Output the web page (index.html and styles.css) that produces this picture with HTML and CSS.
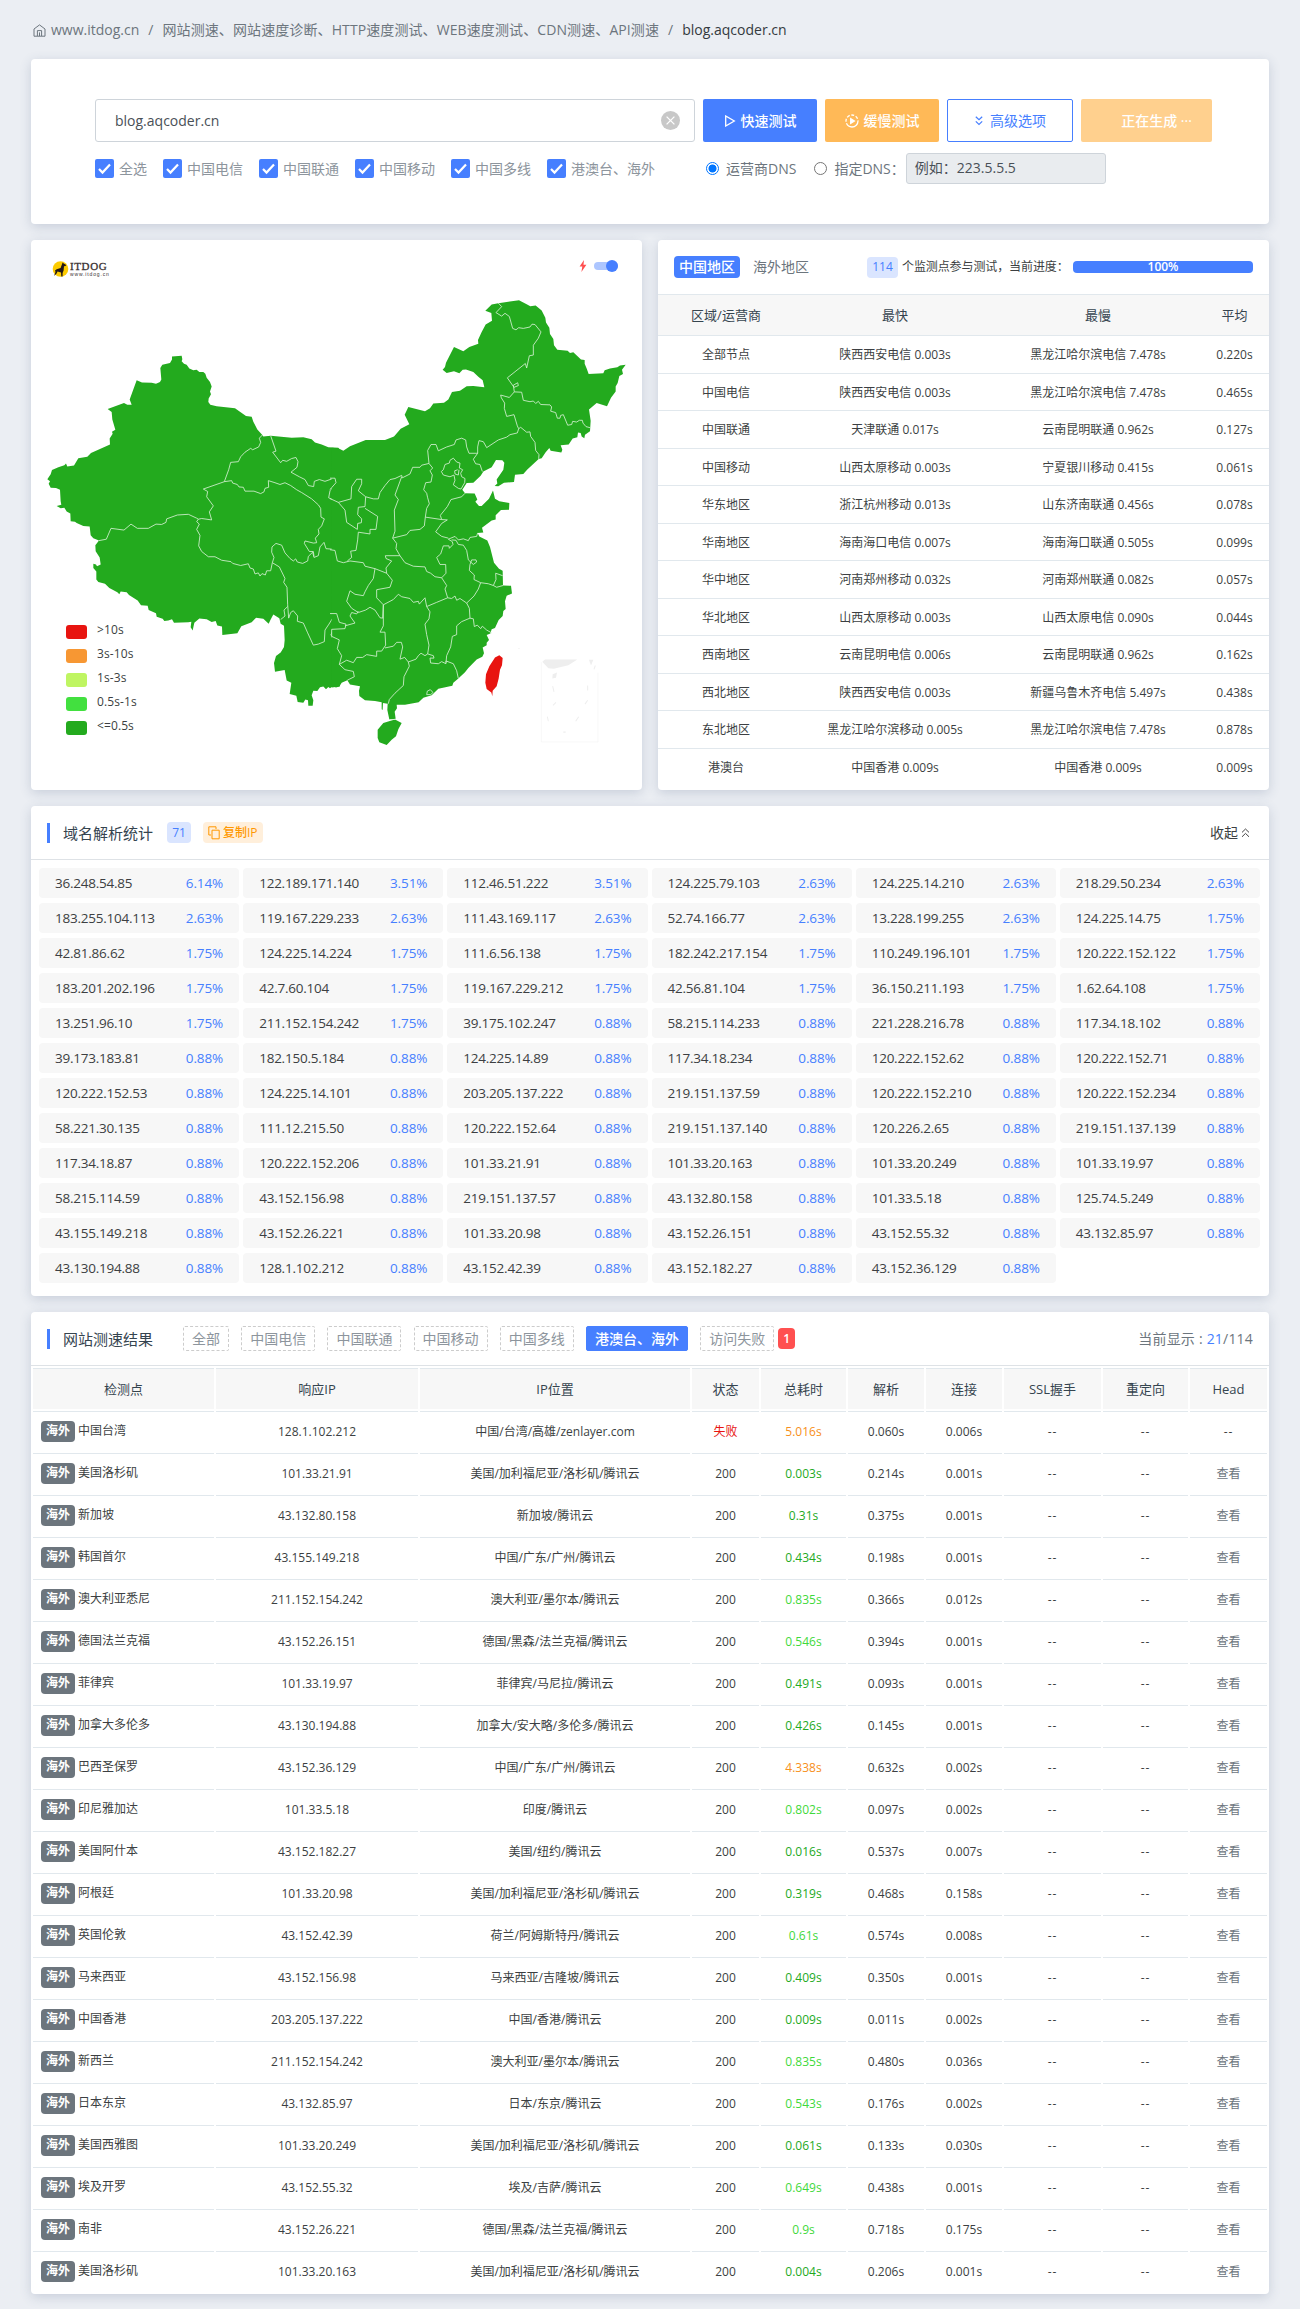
FILE: index.html
```html
<!DOCTYPE html>
<html lang="zh-CN">
<head>
<meta charset="utf-8">
<title>blog.aqcoder.cn - 网站测速</title>
<link rel="stylesheet" href="styles.css">
</head>
<body>
<nav class="breadcrumb">
  <svg class="home" width="13" height="13" viewBox="0 0 13 13"><path d="M1 5 6.5.9 12 5v7.2H1zM4.4 12V6.6h4.2V12M6.5 8.4V12"/></svg>
  <a>www.itdog.cn</a><i>/</i><a class="wide">网站测速、网站速度诊断、HTTP速度测试、WEB速度测试、CDN测速、API测速</a><i>/</i><b>blog.aqcoder.cn</b>
</nav>

<section class="card search">
  <div class="row">
    <div class="host"><span>blog.aqcoder.cn</span>
      <svg width="19" height="19" viewBox="0 0 19 19"><circle cx="9.5" cy="9.5" r="9.5" fill="#c8c8c8"/><path d="m5.6 5.6 7.8 7.8m0-7.8-7.8 7.8" stroke="#fff" stroke-width="1.3"/></svg>
    </div>
    <button class="btn fast"><svg width="12" height="12" viewBox="0 0 12 12"><path d="M1.7 1v10l8.6-5z"/></svg>快速测试</button>
    <button class="btn slow"><svg width="14" height="14" viewBox="0 0 14 14"><circle cx="7" cy="7" r="6" stroke-dasharray="16 1.6 3 1.6 3 1.6 3 1.6 3 1.6"/><path d="M5.7 4.6v4.8L9.4 7z" fill="#fff"/></svg>缓慢测试</button>
    <button class="btn more"><svg width="10" height="10" viewBox="0 0 10 10"><path d="m1.8.8 3.2 3 3.2-3M1.8 5.4l3.2 3 3.2-3"/></svg>高级选项</button>
    <button class="btn busy">正在生成 ···</button>
  </div>
  <div class="row options">
    <div class="checks" id="checks"></div>
    <div class="dns">
      <span class="radio on"></span><span>运营商DNS</span>
      <span class="radio second"></span><span>指定DNS：</span>
      <span class="dns-input">例如：223.5.5.5</span>
    </div>
  </div>
</section>

<div class="pair">
  <section class="card map">
    <svg class="china" width="611" height="550" viewBox="0 0 611 550">
      <g transform="translate(-1 0) scale(.33333 .35077)">
        <path class="land" d="M426 332 455 330 457 340 455 346 462 353 470 356 478 366 490 371 500 370 508 376 520 376 526 381 530 393 540 405 545 418 540 432 543 440 536 452 535 462 541 470 560 474 615 480 632 491 648 502 665 504 670 518 682 540 697 556 700 560 722 558 785 564 820 562 845 568 855 577 875 583 895 591 925 592 930 600V1272L918 1276 908 1272 900 1278 895 1274 888 1281 880 1273 870 1275 862 1286 850 1285 845 1298 850 1312 848 1328 835 1328 834 1312 826 1310 820 1319 803 1317 799 1299 779 1294 784 1262 770 1256 764 1226 735 1231 732 1206 738 1186 752 1176 762 1160 764 1140 762 1100 752 1094 748 1078 730 1068 722 1082 716 1094 700 1080 678 1077 665 1090 634 1101 622 1121 577 1126 576 1102 562 1099 557 1086 545 1089 530 1081 508 1079 493 1091 488 1113 482 1104 484 1088 475 1090 432 1091 426 1081 415 1085 403 1086 398 1080 380 1074 378 1064 356 1055 353 1043 333 1041 323 1028 297 1012 290 1004 272 1002 268 1010 262 1004 238 992 225 980 205 975 199 968 199 945 190 935 190 923 198 925 201 930 212 925 209 905 197 887 196 870 207 857 190 850 182 842 179 817 160 815 140 807 135 803 122 802 121 780 110 774 103 763 92 765 80 758 94 755 92 745 90 712 78 707 62 706 56 695 60 688 52 682 62 668 66 656 85 648 103 642 108 637 112 646 132 643 145 622 172 618 183 607 240 583 239 566 248 552 246 547 256 541 247 512 245 490 233 482 282 465 292 470 305 470 299 455 320 400 336 406 365 407 378 410 390 405 394 398 391 365 397 356 420 351 426 341z"/>
        <path class="edge" d="M697 556 688 565 692 577 686 590 668 598 662 594 645 605 632 618 625 632 602 634 596 655 583 689M722 558 738 602 728 605 752 635 758 628 770 631 785 623 798 620 804 632 801 648 783 662 808 675 825 683 835 700 851 703 853 688 868 683 885 688 915 678 919 692 900 715 896 735 925 748M583 689 605 686 608 693 622 697 627 704 640 705 645 716 672 716 692 723 702 718 705 708 716 705 715 686 735 692 750 697 765 692 782 700 800 712 815 720 845 738 865 755 872 765 873 790 883 795 875 815 865 825 867 838 856 850 860 863 850 864 825 858 823 865 838 888 850 888 852 902M583 689 520 710 533 717 530 732 550 758 538 775 545 798 515 794 505 796M207 857 229 853 243 822 282 827 303 810 322 822 355 822 378 810 395 811 408 805 410 795 442 784 475 782 500 793 505 796 500 803 508 810 500 825 510 842 506 872 515 888 535 903 555 903 575 913 603 917 608 922 632 928 655 923 660 935 670 938 675 952 685 949 690 958 696 951 706 955 710 943 722 943 727 920 732 905 725 890 726 875 738 865 755 870 765 892 780 908 790 915 797 909 802 918 818 922 833 915 835 902 848 890 852 905 865 900 870 875 882 862 888 880 915 882 925 915M727 920 748 932 765 965 761 976 771 990 773 1040 776 1078M773 1045 762 1055 765 1072 752 1082M776 1078 782 1062 790 1057 803 1072 802 1087 820 1092 833 1120 850 1155 865 1152 883 1145 885 1112 897 1095 908 1078 907 1063 922 1065M925 1108 910 1110 903 1125 908 1137 925 1140"/>
      </g>
      <g transform="translate(299 0) scale(.33333 .35077)">
        <path class="land" d="M5 592 25 594 40 601 60 588 107 570 165 570 192 560 212 538 238 525 224 498 235 476 285 488 300 480 310 466 342 464 355 455 366 433 390 430 410 417 430 416 463 420 458 400 445 390 430 376 408 369 398 370 388 380 372 374 350 379 338 370 345 362 348 350 372 305 400 317 418 305 445 296 444 285 455 262 467 241 486 230 484 208 466 202 485 184 505 180 567 172 590 183 601 189 617 187 635 201 646 222 648 235 658 250 660 268 670 282 672 300 682 313 713 316 720 322 730 320 753 341 764 342 764 353 770 366 776 382 820 380 824 371 840 366 862 363 870 358 887 356 876 370 879 382 868 388 863 408 857 418 857 432 843 450 831 474 800 465 777 483 782 515 780 545 765 555 763 565 755 560 752 550 744 549 742 562 728 566 716 583 692 585 697 598 694 606 662 601 658 593 647 605 635 622 626 624 592 654 580 667 555 669 552 690 522 692 505 702 494 701 502 694 500 683 520 655 523 635 517 628 498 627 485 648 460 660 452 672 430 692 410 693 397 712 405 722 434 723 442 740 436 746 447 758 455 758 477 738 489 714 495 738 508 745 538 750 537 769 513 770 497 785 497 797 485 800 456 820 460 834 443 835 448 845 472 857 480 875 492 920 507 937 518 943 519 985 543 986 546 1008 530 1014 525 1030 527 1052 520 1058 518 1072 506 1083 495 1106 485 1110 481 1122 470 1126 477 1140 470 1148 470 1155 458 1162 462 1178 457 1188 440 1196 415 1220 405 1232 385 1250 370 1262 367 1271 325 1279 305 1298 280 1305 266 1318 225 1325 200 1325 201 1335 194 1345 197 1365 178 1367 172 1340 173 1322 159 1320 158 1340 155 1338 155 1318 135 1314 105 1312 88 1300 87 1285 90 1272 60 1267 52 1255 35 1262 28 1273 5 1276zM160 1377 177 1372 195 1367 215 1377 205 1395 198 1415 185 1425 170 1440 148 1432 143 1420 143 1396z"/>
        <path class="edge" d="M505 180 515 190 498 207 515 217 525 209 538 218 548 252 558 256 566 250 580 252 600 248 606 240 615 241 633 262 625 280 610 300 610 328 598 330 590 365 586 352 532 393 552 420 565 415 563 407 550 414 553 433 575 434 580 457 600 461 610 459 617 466 625 460 632 469 660 470 665 476 662 488 677 492 682 508 690 508 692 500 700 498 713 528 725 526 728 517 740 519 748 514 757 514 759 522 768 532 780 535M553 433 538 449 512 442 514 450 524 465 523 480 530 503 552 498 562 530 566 538 572 534 590 548 600 547 602 560 615 577 617 600 627 612 626 624M566 538 562 550 540 555 530 562 505 570 470 592 460 575 447 572 443 590 443 608 430 625 437 638 450 640 457 660M443 608 417 608 410 590 407 570 395 565 378 570 373 583 350 590 325 601 318 583 303 583 293 600 297 637 308 650 300 658 307 670 303 690 287 692 281 712 290 722 293 735 298 752 290 765 286 790M340 655 345 640 358 636 360 628 370 622 380 633 390 636 388 650 398 655 392 665 395 675 405 680 404 692 393 710 385 708 370 698 375 685 372 670 360 675 340 670 334 660zM383 655 374 658 375 667 385 670 387 655M297 637 275 642 270 648 248 648 240 667 217 678 215 671 195 680 180 683 165 700 150 720 145 738 130 738 107 732M215 675 195 727 205 740 193 770 195 830 188 850 230 840 240 828 270 825 283 815 286 790 335 797 331 785 352 760 363 740 395 732 405 722M335 797 352 798 335 808 317 832 335 845 355 850M0 737 25 748 63 738 65 703 80 682 95 682 95 695 85 715 107 732 105 760 85 762 83 783 95 795 94 806 83 808 82 825 50 805 45 770 25 748M0 679 15 679 18 692 5 706 0 711M105 765 143 788 138 825 120 825 120 838 85 833 83 855 78 885 62 887 65 905 52 915M0 883 15 885 22 915 40 920 60 915 100 920 105 930 135 937 170 950 187 970 180 990 140 997 140 1020 160 1040 158 1078 150 1077 135 1055 120 1047 107 1055 85 1062 65 1050 50 1030 60 1000 75 1010 100 1014 105 1003 115 985 130 965 135 937M170 950 168 935 185 915 168 908 166 900 210 900M188 850 200 865 198 880 210 900 225 920 250 930 285 932 290 945 302 950 315 960 335 963 348 950 347 925 330 925 320 905 332 895 340 872 357 872 358 879 369 868 367 860 355 853 375 845 385 855 400 852 415 857 420 848 440 845 443 835M365 855 378 856 385 868 400 870 410 885 415 912 430 925 440 918 438 912 425 912 420 925 418 942 433 955 432 968 452 977 475 980 490 985 500 990 519 985M490 985 498 968 497 950 518 957M335 963 350 985 345 995 353 1020 365 1022 375 1015 380 1027 390 1022 410 1035M452 977 445 995 432 1015 410 1035 418 1050 420 1078 430 1080 433 1102 442 1098 452 1108 457 1101 470 1112 485 1120M420 1078 395 1088 380 1100 380 1125 367 1130 362 1160 350 1185 348 1205M160 1040 190 1025 205 1010 215 1017 240 1022 250 1033 265 1030 268 1038 285 1020 290 1045 320 1033 353 1020M290 1045 300 1060 297 1080 285 1095 290 1125 297 1155 293 1180 285 1185 273 1178 265 1185 258 1195 235 1203 224 1190 210 1195 218 1160 214 1147 200 1147 190 1158 165 1163M160 1040 160 1100 150 1118 165 1118 167 1155 155 1172 140 1172 140 1187 110 1182 98 1190 80 1190 70 1205 50 1198 28 1210 35 1185 22 1165 28 1140 5 1130 5 1110 45 1108 48 1095 28 1090 20 1065 0 1065M45 1100 75 1092 60 1072 65 1062 80 1066 85 1058M28 1210 45 1225 70 1230 73 1245 52 1255M235 1203 238 1215 222 1245 220 1270 195 1292 178 1310 175 1322M293 1180 310 1185 312 1192 300 1192 302 1206 325 1208 335 1202 348 1208 348 1200 370 1208 380 1228 385 1250M178 1367 196 1367M290 1296 292 1286 301 1282 309 1290 302 1296z"/>
        <path fill="#e81410" d="M495 1190 508 1184 518 1192 516 1212 510 1225 506 1250 500 1272 488 1285 487 1301 484 1290 470 1280 466 1262 468 1238 478 1215z"/>
        <path fill="none" stroke="#f4f4f4" stroke-width="2" d="M634 1204V1431H804V1234"/>
        <path fill="#eee" d="M637 1202 645 1196 742 1196 715 1212 690 1218 672 1222 655 1221zM777 1197H790L783 1213zM668 1238 681 1233 678 1248 667 1250z"/>
        <path fill="none" stroke="#eee" stroke-width="3" d="M668 1272 672 1288M678 1318 669 1327M652 1359 655 1372M700 1403H707M737 1372 746 1359M765 1323 773 1312M773 1270V1284M792 1224 796 1213M567 1163V1166"/>
      </g>
    </svg>
    <div class="map-head">
      <div class="logo">
        <svg width="17" height="16" viewBox="0 0 17 16"><circle cx="8.5" cy="8" r="7.8" fill="#fccb00"/><path d="M2 15 3.5 11 3 9.6 4.7 8.3 8.6 7 10.6 1.4 11.7 2.6 14.2 4 13.6 5 12 5.3 11.6 9.6 10.6 12V15.5H9.3L9 11.5 5.5 10.6 4.6 12.6z" fill="#231815"/></svg>
        <div><b>ITDOG</b><small>www.itdog.cn</small></div>
      </div>
      <div class="switch">
        <svg width="8" height="12" viewBox="0 0 8 12"><path d="M5 0 .6 6.4H3.3L2.4 12 7.4 4.8H4.5z" fill="#ff5050"/></svg>
        <span class="track"></span>
      </div>
    </div>
    <ul class="legend">
      <li><i class="l1"></i>&gt;10s</li><li><i class="l2"></i>3s-10s</li><li><i class="l3"></i>1s-3s</li><li><i class="l4"></i>0.5s-1s</li><li><i class="l5"></i>&lt;=0.5s</li>
    </ul>
  </section>

  <section class="card region">
    <div class="region-head">
      <span class="area on">中国地区</span><span class="area">海外地区</span>
      <span class="badge blue push">114</span><span class="note">个监测点参与测试，当前进度：</span><span class="bar">100%</span>
    </div>
    <table class="stats">
      <colgroup><col class="s1"><col class="s2"><col class="s3"><col class="s4"></colgroup>
      <thead><tr><th>区域/运营商</th><th>最快</th><th>最慢</th><th>平均</th></tr></thead>
      <tbody id="stats"></tbody>
    </table>
  </section>
</div>

<section class="card resolve">
  <header class="title">
    <h2>域名解析统计</h2><span class="badge blue count">71</span>
    <span class="badge copy"><svg width="12" height="14" viewBox="0 0 12 14"><path d="M3 9H.8V.8H8V3M4 4.2h7.2v8.6H4z"/></svg>复制IP</span>
    <span class="fold">收起<svg width="9" height="10" viewBox="0 0 9 10"><path d="M1 4.4 4.5 1 8 4.4M1 8.8l3.5-3.4L8 8.8"/></svg></span>
  </header>
  <div class="ips" id="ips"></div>
</section>

<section class="card result">
  <header class="title">
    <h2>网站测速结果</h2>
    <div class="tabs"><span>全部</span><span>中国电信</span><span>中国联通</span><span>中国移动</span><span>中国多线</span><span class="on">港澳台、海外</span><span>访问失败</span></div>
    <span class="badge red">1</span>
    <span class="shown">当前显示 : <em>21</em>/114</span>
  </header>
  <table class="nodes">
    <colgroup><col class="c1"><col class="c2"><col class="c3"><col class="c4"><col class="c5"><col class="c6"><col class="c7"><col class="c8"><col class="c9"><col class="c10"></colgroup>
    <thead><tr><th>检测点</th><th>响应IP</th><th>IP位置</th><th>状态</th><th>总耗时</th><th>解析</th><th>连接</th><th>SSL握手</th><th>重定向</th><th>Head</th></tr></thead>
    <tbody id="nodes"></tbody>
  </table>
</section>
<script src="script.js"></script>
</body>
</html>
```
FILE: styles.css
```css
* { box-sizing: border-box; }
body {
  margin: 0;
  padding: 20px 31px 15px;
  background: #ebeef3;
  color: #3c3f42;
  font: 14px/20px "Open Sans", "Noto Sans", "Noto Sans CJK SC", sans-serif;
}
svg { display: block; flex: none; fill: none; }
.card {
  background: #fff;
  border-radius: 4px;
  box-shadow: 0 3px 12px rgba(60, 80, 120, .2);
}

.breadcrumb { display: flex; align-items: center; height: 20px; margin-bottom: 19px; padding-left: 2px; color: #6c757d; white-space: nowrap; }
.breadcrumb b { font-weight: 400; color: #343a40; }
.breadcrumb i { font-style: normal; padding: 0 9px; }
.breadcrumb .wide { letter-spacing: .1px; }
.home { stroke: #6c757d; margin-right: 5px; }

.search { height: 165px; padding: 40px 57px 0 64px; margin-bottom: 16px; }
.row { display: flex; gap: 8px; }
.host {
  display: flex; align-items: center; justify-content: space-between;
  width: 600px; height: 43px; padding: 0 14px 0 19px;
  border: 1px solid #ced4da; border-radius: 3px; color: #495057;
}
.btn {
  display: flex; align-items: center; justify-content: center; gap: 5px;
  height: 43px; padding: 0; border: 0; border-radius: 2px;
  color: #fff; font: 500 14px/20px "Open Sans", "Noto Sans CJK SC", sans-serif;
}
.fast { width: 114px; background: #467fff; }
.fast svg, .slow svg { stroke: #fff; stroke-width: 1.3; }
.slow { width: 114px; background: #ffb957; }
.more { width: 126px; background: #fff; border: 1px solid #467fff; color: #467fff; font-weight: 400; }
.more svg { stroke: #467fff; stroke-width: 1.2; }
.more { gap: 6px; }
.busy { width: 131px; background: #ffd08e; padding-left: 20px; }
.options { align-items: center; height: 31px; margin-top: 11px; }
.checks { display: flex; gap: 16px; width: 603px; color: #8d959d; }
.checks span { display: flex; align-items: center; gap: 5px; }
.checks svg { background: #467fff; border-radius: 2px; }
.dns { display: flex; align-items: center; gap: 7px; color: #6c757d; white-space: nowrap; }
.radio { width: 13px; height: 13px; border: 1px solid #767676; border-radius: 50%; background: #fff; }
.radio.on { border-color: #0075ff; background: radial-gradient(circle, #0075ff 3.6px, #fff 4.4px); }
.radio.second { margin-left: 11px; }
.dns-input { width: 200px; height: 31px; padding: 4px 8px; margin-left: -6px; border: 1px solid #ced4da; border-radius: 3px; background: #e9ecef; color: #495057; }

.pair { display: grid; grid-template-columns: 1fr 1fr; gap: 16px; height: 550px; margin-bottom: 16px; }
.map { position: relative; display: flex; flex-direction: column; justify-content: space-between; }
.china { position: absolute; left: 0; top: 0; }
.land { fill: #23aa1e; }
.edge { stroke: #d2f0d0; stroke-width: 2.5; stroke-linejoin: round; }
.map-head { position: relative; display: flex; justify-content: space-between; padding: 20px 24px 0 21px; }
.logo { display: flex; gap: 1px; padding-top: 1px; }
.logo b, .logo small { display: block; font-family: "Liberation Serif", serif; color: #3a3232; }
.logo b { font-size: 11px; line-height: 11px; font-weight: 400; letter-spacing: .6px; -webkit-text-stroke: .3px #3a3232; }
.logo small { font: 5px/5px "Liberation Sans", sans-serif; letter-spacing: .85px; }
.switch { display: flex; align-items: center; gap: 7px; height: 12px; }
.track { display: flex; justify-content: flex-end; align-items: center; width: 24px; height: 8px; border-radius: 4px; background: #adc6ff; }
.track::after { content: ""; width: 12px; height: 12px; flex: none; border-radius: 50%; background: #467fff; }
.legend { position: relative; margin: 0; padding: 0 0 51px 35px; list-style: none; font-size: 12px; }
.legend li { display: flex; align-items: center; gap: 10px; height: 24px; line-height: 22px; padding-bottom: 2px; letter-spacing: .1px; }
.legend i { width: 21px; height: 14px; border-radius: 3px; margin-top: 3px; }
.l1 { background: #e81410; } .l2 { background: #f79733; } .l3 { background: #bff562; } .l4 { background: #42e03f; } .l5 { background: #23aa1e; }

.region-head { display: flex; align-items: center; height: 54px; padding: 0 16px; white-space: nowrap; }
.area { height: 22px; line-height: 21px; padding: 0 5px; margin-right: 8px; color: #6c757d; }
.area.on { background: #467fff; color: #fff; border-radius: 4px; font-weight: 500; }
.badge { display: inline-flex; align-items: center; height: 21px; padding: 0 5px; border-radius: 4px; font-size: 12px; }
.blue { background: #dae5ff; color: #467fff; font-weight: 500; }
.push { margin-left: auto; width: 31px; justify-content: center; }
.note { font-size: 12px; margin-left: 4px; width: 171px; letter-spacing: -.1px; }
.bar { width: 180px; height: 12px; border-radius: 4px; background: #467fff; color: #fff; text-align: center; font: 600 12px/12px "Open Sans", sans-serif; }
table { table-layout: fixed; width: 100%; font-size: 12px; text-align: center; }
th { font-size: 13px; font-weight: 400; color: #35444f; background: #f7f7f7; padding: 0; }
td { padding: 0; white-space: nowrap; }
.stats { border-collapse: collapse; }
.stats th, .stats td { border-top: 1px solid #e1e8ed; }
.stats th { height: 41px; }
.stats td { height: 37.5px; padding-top: 2px; }
.s1 { width: 136px; } .s2 { width: 202px; } .s3 { width: 204px; }

.title { display: flex; align-items: center; height: 54px; padding: 0 16px; border-bottom: 1px solid #dee2e6; }
.title h2 { margin: 0; padding-left: 13px; border-left: 3px solid #467fff; font-size: 15px; line-height: 20px; font-weight: 400; color: #35444f; }
.count { margin-left: 14px; width: 24px; justify-content: center; }
.copy { margin-left: 12px; gap: 3px; background: #ffefdb; color: #ff9800; font-weight: 500; }
.copy svg { stroke: #ff9800; }
.fold { display: flex; align-items: center; gap: 3px; margin-left: auto; padding-right: 3px; }
.fold svg { stroke: #444; }
.resolve { height: 490px; margin-bottom: 16px; }
.ips { display: grid; grid-template-columns: repeat(6, 1fr); gap: 5px 4px; padding: 8px 9px 0 8px; font-size: 13.5px; letter-spacing: -.23px; }
.ips div { display: flex; justify-content: space-between; align-items: center; height: 30px; padding: 0 16px; border-radius: 4px; background: #f7f7f7; }
.ips b { font-weight: 500; color: #467fff; letter-spacing: -.1px; }

.result { height: 982px; }
.tabs { display: flex; gap: 12.2px; margin-left: 30px; }
.tabs span { height: 25px; line-height: 23px; padding: 0 8px; border: 1px dashed #ccc; border-radius: 2px; color: #8d959d; white-space: nowrap; }
.tabs .on { background: #467fff; border: 1px solid #467fff; color: #fff; font-weight: 500; }
.red { margin-left: 4px; width: 17px; background: #ff5050; color: #fff; font-weight: 600; }
.shown { margin-left: auto; color: #6c757d; letter-spacing: .2px; }
.shown em { font-style: normal; color: #467fff; }
.nodes { border-spacing: 2px; }
.nodes th, .nodes td { border-top: 1px solid #e1e8ed; }
.nodes th { height: 41px; }
.nodes td { height: 40px; }
.nodes td:first-child { text-align: left; padding-left: 8px; }
.nodes .none { letter-spacing: .8px; }
.tag { display: inline-block; height: 21px; line-height: 20px; padding: 0 5px; margin-right: 3px; border-radius: 4px; background: #6c757d; color: #fff; font-weight: 700; }
.c1 { width: 181px; } .c2 { width: 202px; } .c3 { width: 270px; } .c4 { width: 67px; } .c5 { width: 85px; } .c6 { width: 76px; } .c7 { width: 76px; } .c8 { width: 97px; } .c9 { width: 85px; } .c10 { width: 77px; }
.fail { color: #e81410; }
.warn, .good, .okay { font-weight: 500; }
.warn { color: #f79020; }
.good { color: #23aa1e; }
.okay { color: #3fd93c; }
.view { color: #6c757d; }
```
FILE: script.js
```javascript
const fill = (id, html) => { document.getElementById(id).innerHTML = html; };

fill('checks', ['全选', '中国电信', '中国联通', '中国移动', '中国多线', '港澳台、海外'].map(t =>
  `<span><svg width="19" height="19" viewBox="0 0 19 19"><path d="m4 10 3.5 3.6L15 5.4" stroke="#fff" stroke-width="2.2"/></svg>${t}</span>`).join(''));

const stats = `全部节点|陕西西安电信 0.003s|黑龙江哈尔滨电信 7.478s|0.220s
中国电信|陕西西安电信 0.003s|黑龙江哈尔滨电信 7.478s|0.465s
中国联通|天津联通 0.017s|云南昆明联通 0.962s|0.127s
中国移动|山西太原移动 0.003s|宁夏银川移动 0.415s|0.061s
华东地区|浙江杭州移动 0.013s|山东济南联通 0.456s|0.078s
华南地区|海南海口电信 0.007s|海南海口联通 0.505s|0.099s
华中地区|河南郑州移动 0.032s|河南郑州联通 0.082s|0.057s
华北地区|山西太原移动 0.003s|山西太原电信 0.090s|0.044s
西南地区|云南昆明电信 0.006s|云南昆明联通 0.962s|0.162s
西北地区|陕西西安电信 0.003s|新疆乌鲁木齐电信 5.497s|0.438s
东北地区|黑龙江哈尔滨移动 0.005s|黑龙江哈尔滨电信 7.478s|0.878s
港澳台|中国香港 0.009s|中国香港 0.009s|0.009s`;
fill('stats', stats.split('\n').map(r => `<tr>${r.split('|').map(c => `<td>${c}</td>`).join('')}</tr>`).join(''));

const ips = `36.248.54.85 122.189.171.140 112.46.51.222 124.225.79.103 124.225.14.210 218.29.50.234
183.255.104.113 119.167.229.233 111.43.169.117 52.74.166.77 13.228.199.255 124.225.14.75
42.81.86.62 124.225.14.224 111.6.56.138 182.242.217.154 110.249.196.101 120.222.152.122
183.201.202.196 42.7.60.104 119.167.229.212 42.56.81.104 36.150.211.193 1.62.64.108
13.251.96.10 211.152.154.242 39.175.102.247 58.215.114.233 221.228.216.78 117.34.18.102
39.173.183.81 182.150.5.184 124.225.14.89 117.34.18.234 120.222.152.62 120.222.152.71
120.222.152.53 124.225.14.101 203.205.137.222 219.151.137.59 120.222.152.210 120.222.152.234
58.221.30.135 111.12.215.50 120.222.152.64 219.151.137.140 120.226.2.65 219.151.137.139
117.34.18.87 120.222.152.206 101.33.21.91 101.33.20.163 101.33.20.249 101.33.19.97
58.215.114.59 43.152.156.98 219.151.137.57 43.132.80.158 101.33.5.18 125.74.5.249
43.155.149.218 43.152.26.221 101.33.20.98 43.152.26.151 43.152.55.32 43.132.85.97
43.130.194.88 128.1.102.212 43.152.42.39 43.152.182.27 43.152.36.129`;
const share = i => i < 1 ? '6.14%' : i < 3 ? '3.51%' : i < 11 ? '2.63%' : i < 26 ? '1.75%' : '0.88%';
fill('ips', ips.split(/\s+/).map((ip, i) => `<div><span>${ip}</span><b>${share(i)}</b></div>`).join(''));

const nodes = `中国台湾|128.1.102.212|中国/台湾/高雄/zenlayer.com|失败|5.016s|0.060s|0.006s
美国洛杉矶|101.33.21.91|美国/加利福尼亚/洛杉矶/腾讯云|200|0.003s|0.214s|0.001s
新加坡|43.132.80.158|新加坡/腾讯云|200|0.31s|0.375s|0.001s
韩国首尔|43.155.149.218|中国/广东/广州/腾讯云|200|0.434s|0.198s|0.001s
澳大利亚悉尼|211.152.154.242|澳大利亚/墨尔本/腾讯云|200|0.835s|0.366s|0.012s
德国法兰克福|43.152.26.151|德国/黑森/法兰克福/腾讯云|200|0.546s|0.394s|0.001s
菲律宾|101.33.19.97|菲律宾/马尼拉/腾讯云|200|0.491s|0.093s|0.001s
加拿大多伦多|43.130.194.88|加拿大/安大略/多伦多/腾讯云|200|0.426s|0.145s|0.001s
巴西圣保罗|43.152.36.129|中国/广东/广州/腾讯云|200|4.338s|0.632s|0.002s
印尼雅加达|101.33.5.18|印度/腾讯云|200|0.802s|0.097s|0.002s
美国阿什本|43.152.182.27|美国/纽约/腾讯云|200|0.016s|0.537s|0.007s
阿根廷|101.33.20.98|美国/加利福尼亚/洛杉矶/腾讯云|200|0.319s|0.468s|0.158s
英国伦敦|43.152.42.39|荷兰/阿姆斯特丹/腾讯云|200|0.61s|0.574s|0.008s
马来西亚|43.152.156.98|马来西亚/吉隆坡/腾讯云|200|0.409s|0.350s|0.001s
中国香港|203.205.137.222|中国/香港/腾讯云|200|0.009s|0.011s|0.002s
新西兰|211.152.154.242|澳大利亚/墨尔本/腾讯云|200|0.835s|0.480s|0.036s
日本东京|43.132.85.97|日本/东京/腾讯云|200|0.543s|0.176s|0.002s
美国西雅图|101.33.20.249|美国/加利福尼亚/洛杉矶/腾讯云|200|0.061s|0.133s|0.030s
埃及开罗|43.152.55.32|埃及/吉萨/腾讯云|200|0.649s|0.438s|0.001s
南非|43.152.26.221|德国/黑森/法兰克福/腾讯云|200|0.9s|0.718s|0.175s
美国洛杉矶|101.33.20.163|美国/加利福尼亚/洛杉矶/腾讯云|200|0.004s|0.206s|0.001s`;
const level = t => t > 3 ? 'warn' : t > 0.5 ? 'okay' : 'good';
fill('nodes', nodes.split('\n').map(r => {
  const [name, ip, place, state, total, dns, conn] = r.split('|');
  const failed = state === '失败';
  return `<tr><td><span class="tag">海外</span>${name}</td><td>${ip}</td><td>${place}</td><td class="${failed ? 'fail' : ''}">${state}</td>
<td class="${level(parseFloat(total))}">${total}</td><td>${dns}</td><td>${conn}</td><td class="none">--</td><td class="none">--</td><td class="${failed ? 'none' : 'view'}">${failed ? '--' : '查看'}</td></tr>`;
}).join(''));
```
